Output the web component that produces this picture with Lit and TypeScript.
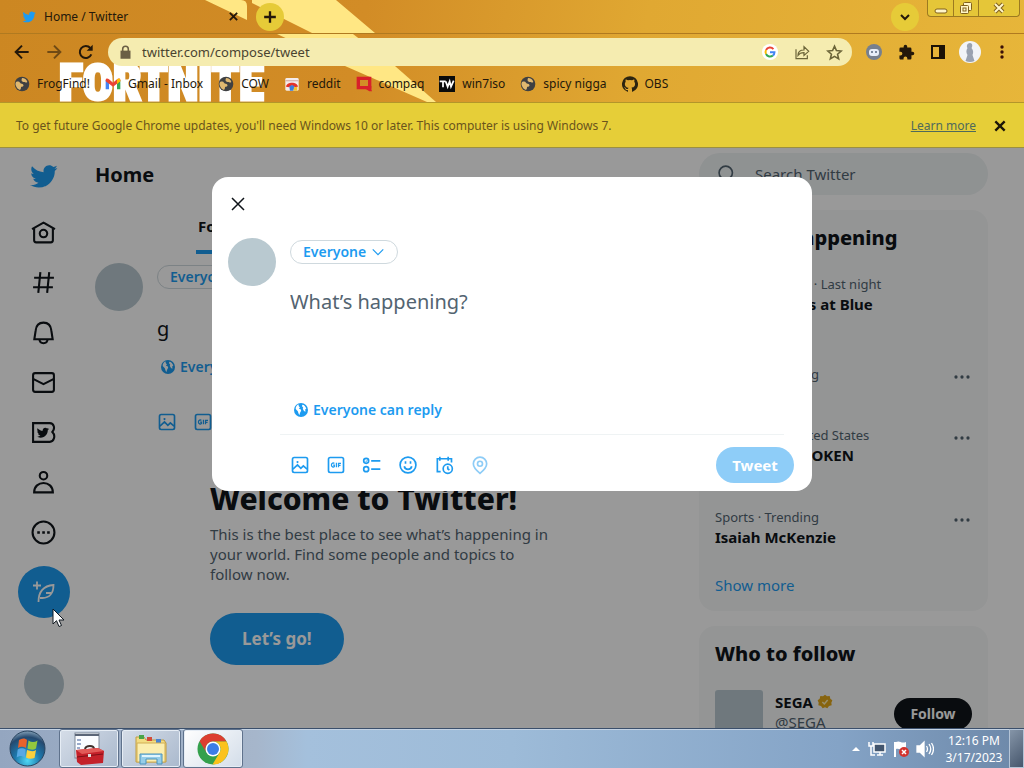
import { LitElement, html, css, svg, nothing } from "lit";
import { customElement, state } from "lit/decorators.js";
import { classMap } from "lit/directives/class-map.js";

const BIRD =
  "M23.643 4.937c-.835.37-1.732.62-2.675.733.962-.576 1.7-1.49 2.048-2.578-.9.534-1.897.922-2.958 1.13-.85-.904-2.06-1.47-3.4-1.47-2.572 0-4.658 2.086-4.658 4.66 0 .364.042.718.12 1.06-3.873-.195-7.304-2.05-9.602-4.868-.4.69-.63 1.49-.63 2.342 0 1.616.823 3.043 2.072 3.878-.764-.025-1.482-.234-2.11-.583v.06c0 2.257 1.605 4.14 3.737 4.568-.392.106-.803.162-1.227.162-.3 0-.593-.028-.877-.082.593 1.85 2.313 3.198 4.352 3.234-1.595 1.25-3.604 1.995-5.786 1.995-.376 0-.747-.022-1.112-.065 2.062 1.323 4.51 2.093 7.14 2.093 8.57 0 13.255-7.098 13.255-13.254 0-.2-.005-.402-.014-.602.91-.658 1.7-1.477 2.323-2.41z";

const line = (body: unknown, size = 24, width = 2) => html`<svg
  width=${size} height=${size} viewBox="0 0 24 24" fill="none" stroke="currentColor"
  stroke-width=${width} aria-hidden="true">${body}</svg>`;

const solid = (body: unknown, size = 16) => html`<svg
  width=${size} height=${size} viewBox="0 0 24 24" fill="currentColor" aria-hidden="true">${body}</svg>`;

const bird = (size: number) => solid(svg`<path d=${BIRD}/>`, size);

const cross = (size: number, width: number) => line(svg`<path d="M4 4l16 16M20 4L4 20"/>`, size, width);

const siteGlobe = solid(svg`
  <circle cx="12" cy="12" r="11" fill="#3f4042"/>
  <path fill="#e0b870" d="M3 9c3-1 5-1 6 1 1 2 4 1 5 3 1 2-1 3-3 3-1 1 0 3-2 5-3-1-5-3-6-6-1-2-1-4 0-6zM12 3c4 0 7 2 8 6-2 2-3 0-5 0s-5-1-3-6z"/>`);

const replyGlobe = solid(svg`
  <circle cx="12" cy="12" r="10.500"/>
  <path class="land" d="M8 3.500c1 2 0 3 2 4 1 1-1 2-1 3 2 0 4 1 3 3-1 2-2 3-2 6-2-1-2-4-3-6-1-1-3-2-3-4 0-2 2-5 4-6zM14 4c3 0 5 3 6 6-2 0-2 2-1 4-2 1-3-1-4-3-1-1 1-2 0-3-1-1-2-2-1-4z"/>`);

const pictureIcon = line(svg`
  <rect x="3" y="3" width="18" height="18" rx="2"/>
  <circle cx="9" cy="8.500" r="1.300" fill="currentColor" stroke="none"/>
  <path d="M3.500 17l5.500-5 4 4 3-3 4.500 4"/>`, 20);

const gifIcon = line(svg`
  <rect x="3" y="3" width="18" height="18" rx="2"/>
  <path stroke-width="1.500" d="M10 10.200C9 9 6.500 9.500 6.500 12s2.500 3 3.500 1.800V12H8.600M12.500 9.300v5.400M15 14.700V9.900h3M15 12.300h2.500"/>`, 20);

const pollIcon = line(svg`
  <circle cx="5" cy="7" r="3"/><circle cx="5" cy="17" r="3"/>
  <path d="M4 7l1 1 1.500-2" stroke-width="1"/><path d="M11 7h11M11 17h11"/>`, 20);

const smileIcon = line(svg`
  <circle cx="12" cy="12" r="9.500"/>
  <path d="M9 7.500v3M15 7.500v3M7.500 13.500c1 5 8 5 9 0"/>`, 20);

const scheduleIcon = line(svg`
  <path d="M8 20H4V4.500h17V9M7 2v5M17 2v5"/>
  <circle cx="16.500" cy="16.500" r="5.500"/><path d="M16.500 13.500v3l2 1.500"/>`, 20);

const placeIcon = line(svg`
  <path d="M12 22C7 18 4 14.500 4 10.500a8 8 0 0116 0C20 14.500 17 18 12 22z"/>
  <circle cx="12" cy="10.500" r="3"/>`, 20);

const toolIcons = [
  { label: "Media", icon: pictureIcon },
  { label: "GIF", icon: gifIcon },
  { label: "Poll", icon: pollIcon },
  { label: "Emoji", icon: smileIcon },
  { label: "Schedule", icon: scheduleIcon },
  { label: "Location", icon: placeIcon, off: true },
];

const navItems = [
  { label: "Home", icon: svg`<path d="M1 8.700L12 2.500l11 6.200"/><path d="M3 8v11.500a2 2 0 002 2h14a2 2 0 002-2V8"/><circle cx="12" cy="13" r="3.600"/>` },
  { label: "Explore", icon: svg`<path d="M9 2L7 22M17.500 2l-2 20M3 7.500h19M2 16.500h19"/>` },
  { label: "Notifications", icon: svg`<path d="M3.200 18.500L4.500 10C5 5 8 2.500 12 2.500S19 5 19.500 10l1.300 8.500zM8 18.500c.5 5 7.500 5 8 0"/>` },
  { label: "Messages", icon: svg`<rect x="2" y="3" width="20" height="18" rx="2"/><path d="M2 8.500l10 5 10-5"/>` },
  { label: "Twitter Blue", icon: svg`<path d="M2 3h16c4 0 5.500 5 2.500 8.500C24 15 22 21 18 21H2z"/><path transform="translate(5 6) scale(.52)" fill="currentColor" stroke="none" d=${BIRD}/>` },
  { label: "Profile", icon: svg`<circle cx="12" cy="5.500" r="3.600"/><path d="M3 21.500c0-12 18-12 18 0z"/>` },
  { label: "More", icon: svg`<circle cx="12" cy="12" r="10.500"/><path stroke-width="2.500" d="M6 12h2.500M10.800 12h2.500M15.500 12H18"/>` },
];

const gmail = svg`
  <path fill="#4285f4" d="M1 20V6l5 4v10z"/><path fill="#34a853" d="M18 20V10l5-4v14z"/>
  <path fill="#ea4335" d="M1 6c0-3 3-3 5-1l6 5 6-5c2-2 5-2 5 1v2l-11 8L1 8z"/>
  <path fill="#fbbc04" d="M18 5c2-2 5-2 5 1v2l-5 4z"/>`;
const snoo = svg`
  <rect x="2" y="3" width="20" height="19" rx="2" fill="#f4ecec"/>
  <path d="M2 7h20" stroke="#d9b7b0" stroke-width="2"/>
  <path fill="#e5332a" d="M3 16c1-8 17-8 18 0l-5 1c-2-3-6-3-8 0z"/>
  <path fill="#3b7ddd" d="M8 16c2-3 6-3 8 0l-2 6H9z"/><path fill="#f6c02c" d="M15 17l5-1v6h-6z"/>`;
const compaq = svg`<path fill="none" stroke="#d8202a" stroke-width="5" d="M20.500 19V3.500h-17v14H17"/><path fill="#d8202a" d="M14 15h9v5l1 3h-4l-6-4z"/>`;
const tw = svg`<rect width="24" height="24" fill="#0b0b0b"/><path fill="none" stroke="#fff" stroke-width="2.600" d="M1 8h9M6 8v9M10 8l3 8 3-8 2 8 4-9"/>`;
const octocat = svg`<path fill="#2c2410" d="M12 .3a12 12 0 00-3.800 23.400c.6.100.8-.3.800-.6v-2c-3.300.7-4-1.600-4-1.600-.6-1.400-1.400-1.800-1.400-1.800-1-.7.100-.7.100-.7 1.200 0 1.900 1.200 1.900 1.200 1 1.800 2.800 1.300 3.500 1 0-.8.400-1.300.7-1.600-2.700-.3-5.500-1.300-5.500-6 0-1.200.5-2.300 1.300-3.100-.2-.4-.6-1.600 0-3.200 0 0 1-.3 3.400 1.200a11.500 11.500 0 016 0c2.300-1.500 3.300-1.200 3.300-1.200.6 1.600.2 2.800 0 3.200.9.800 1.300 1.900 1.300 3.200 0 4.600-2.800 5.600-5.500 5.900.5.400.9 1 .9 2.200v3.300c0 .3.100.7.800.6A12 12 0 0012 .3"/>`;

const bookmarks = [
  { name: "FrogFind!", icon: siteGlobe },
  { name: "Gmail - Inbox", icon: solid(gmail) },
  { name: "COW", icon: siteGlobe },
  { name: "reddit", icon: solid(snoo) },
  { name: "compaq", icon: solid(compaq) },
  { name: "win7iso", icon: solid(tw) },
  { name: "spicy nigga", icon: siteGlobe },
  { name: "OBS", icon: solid(octocat) },
];

const trends = [
  { kind: "lead", context: "NHL Ice Hockey · Last night", title: "N.Y. Islanders at Blue Jackets", menu: false },
  { kind: "short", context: "Sports · Trending", title: "Mets", menu: true },
  { kind: "tall", context: "Trending in United States", title: "SONGS UNSPOKEN", menu: true },
  { kind: "last", context: "Sports · Trending", title: "Isaiah McKenzie", menu: true },
];

@customElement("app-root")
export class AppRoot extends LitElement {
  @state() private draft = "";

  static styles = css`
    :host {
      display: flex;
      flex-direction: column;
      height: 100vh;
      overflow: hidden;
      font-family: "Noto Sans", sans-serif;
      color: #0f1419;
    }
    * { box-sizing: border-box; }
    svg { display: block; flex: none; }
    button { font: inherit; color: inherit; background: none; border: 0; padding: 0; cursor: pointer; }
    a { color: inherit; text-decoration: none; }
    h1, h2, p { margin: 0; }

    /* Browser chrome */
    .chrome {
      position: relative;
      flex: none;
      font-size: 12px;
      line-height: 16px;
      color: #24180a;
      background: linear-gradient(100deg, #cc8722 0%, #d28c26 35%, #e0a832 62%, #e7b63a 100%);
    }
    .art { position: absolute; inset: 0; width: 100%; height: 102px; overflow: hidden; }
    .art svg { position: absolute; left: 0; top: 0; }
    .wordmark {
      position: absolute;
      left: 59px;
      top: 51px;
      font: 900 50px/64px "Roboto Condensed", "Open Sans Condensed", "Liberation Sans Narrow", "Roboto", sans-serif;
      color: #fff;
      -webkit-text-stroke: 3px #fff;
    }
    .row { position: relative; display: flex; align-items: center; }
    .tabs { height: 34px; padding-left: 22px; border-bottom: 1px solid #b07a20; align-items: stretch; }
    .tab { display: flex; align-items: center; width: 217px; }
    .tab .bird { color: #1d9bf0; margin-right: 8px; }
    .tab .name { flex: 1; }
    .round {
      display: grid;
      place-items: center;
      width: 28px;
      height: 28px;
      border-radius: 50%;
      background: #e6cb38;
      margin: 3px 0 0 17px;
    }
    .spread { flex: 1; }
    .caption {
      display: flex;
      height: 17px;
      margin: 0 4px 0 8px;
      border: 1px solid #9c7a20;
      border-top: 0;
      border-radius: 0 0 4px 4px;
      background: #e5c638;
    }
    .caption button { display: grid; place-items: center; width: 25px; color: #fff7d0; }
    .caption button + button { border-left: 1px solid #9c7a20; }
    .caption button:last-child { width: 41px; }
    .toolbar { height: 36px; padding: 0 6px 0 14px; }
    .toolbar > .step { margin-right: 16px; }
    .toolbar .dim { opacity: .55; }
    .address {
      flex: 1;
      display: flex;
      align-items: center;
      height: 28px;
      padding: 0 2px 0 10px;
      margin-right: 6px;
      margin-left: -2px;
      border-radius: 14px;
      background: #f5ecb0;
    }
    .address input {
      flex: 1;
      min-width: 0;
      margin-left: 9px;
      padding: 0;
      border: 0;
      outline: 0;
      background: none;
      font: 13px/20px "Noto Sans", sans-serif;
      color: #4a4430;
    }
    .address button { display: grid; place-items: center; width: 32px; color: #6b6438; }
    .ext { display: grid; place-items: center; width: 32px; }
    .bookmarks { height: 32px; padding: 0 0 4px 14px; gap: 15px; }
    .bookmarks a { display: flex; align-items: center; gap: 7px; }
    .infobar {
      position: relative;
      display: flex;
      align-items: center;
      height: 46px;
      padding: 2px 17px 0 16px;
      border-top: 1px solid #b3962a;
      border-bottom: 1px solid #9c9040;
      background: #e6ce38;
      color: #6a541c;
    }
    .infobar p { flex: 1; }
    .infobar a { color: #4f6a5c; text-decoration: underline; margin-right: 17px; }
    .infobar button { color: #1c1608; }

    /* Site */
    .site {
      position: relative;
      flex: 1;
      min-height: 0;
      overflow: hidden;
      display: grid;
      grid-template-columns: 79px minmax(0, 1fr) 289px;
      grid-template-rows: minmax(0, 1fr);
      padding: 0 36px 0 4px;
      background: #fff;
      font-size: 15px;
      line-height: 20px;
    }
    .nav { display: flex; flex-direction: column; align-items: center; padding: 3px 0 24px; min-height: 0; }
    .nav a { display: grid; place-items: center; width: 50px; height: 50px; flex: none; }
    .nav .logo { color: #1d9bf0; margin-bottom: 6px; }
    .compose {
      display: grid;
      place-items: center;
      flex: none;
      width: 52px;
      height: 52px;
      margin-top: 9px;
      border-radius: 50%;
      background: #1d9bf0;
      color: #fff;
    }
    .avatar { flex: none; width: 48px; height: 48px; border-radius: 50%; background: #b9c9d0; }
    .nav .avatar { width: 40px; height: 40px; margin-top: auto; }
    .main { padding-left: 12px; }
    .main h1 { font-size: 20px; line-height: 24px; padding-top: 15px; }
    .views { display: flex; height: 53px; margin: 14px 0 9px; width: 600px; max-width: 100%; }
    .views button { position: relative; width: 50%; display: flex; justify-content: center; align-items: center; font-weight: 500; color: #536471; }
    .views .on { font-weight: 700; color: #0f1419; width: 262px; }
    .views .on span { padding: 15px 2px 14px; border-bottom: 4px solid #1d9bf0; }
    .entry { display: flex; gap: 14px; }
    .entry .col { flex: 1; min-width: 0; }
    .pill {
      display: flex;
      align-items: center;
      gap: 5px;
      width: max-content;
      height: 24px;
      padding: 0 12px;
      border: 1px solid #cfd9de;
      border-radius: 12px;
      color: #1d9bf0;
      font-size: 14px;
      line-height: 16px;
      font-weight: 600;
    }
    .reply { display: flex; align-items: center; gap: 4px; color: #1d9bf0; font-size: 14px; font-weight: 600; height: 24px; padding-left: 3px; }
    .land { fill: #fff; }
    .tools { display: flex; gap: 16px; color: #1d9bf0; }
    .tools .off { opacity: .5; }
    .main .pill { margin-top: 2px; }
    .typed { font-size: 20px; line-height: 24px; margin: 28px 0 14px; }
    .main .tools { margin-top: 33px; }
    .welcome { margin: 50px 0 0 115px; width: 340px; max-width: 100%; }
    .welcome h2 { font-size: 30px; line-height: 34px; font-weight: 800; white-space: nowrap; margin-bottom: 8px; }
    .welcome p { color: #536471; }
    .go { height: 52px; padding: 0 32px; margin-top: 29px; border-radius: 26px; background: #1d9bf0; color: #fff; font-size: 17px; font-weight: 700; }

    .side { min-width: 0; }
    .search { display: flex; align-items: center; gap: 18px; height: 42px; margin-top: 5px; padding: 0 18px; border-radius: 21px; background: #eff3f4; color: #536471; }
    .search input { flex: 1; min-width: 0; border: 0; padding: 0; outline: 0; background: none; font: inherit; }
    input::placeholder, textarea::placeholder { color: #536471; opacity: 1; }
    .card { margin-top: 15px; border-radius: 16px; background: #f7f9f9; padding: 15px 16px; }
    .card h2 { font-size: 20px; line-height: 26px; font-weight: 800; }
    .trend { display: flex; justify-content: space-between; align-items: flex-start; }
    .trend p { font-size: 13px; color: #536471; white-space: nowrap; }
    .trend strong { display: block; font-weight: 700; }
    .trend button { color: #536471; margin: 4px 1px 0 0; }
    .lead { height: 113px; padding-top: 23px; }
    .lead > div { width: 175px; }
    .short { height: 61px; }
    .tall { height: 82px; }
    .last { height: 68px; }
    .more { color: #1d9bf0; display: block; }
    .trends { height: 401px; }
    .follow { display: flex; align-items: flex-start; margin-top: 23px; gap: 12px; }
    .follow .avatar { border-radius: 3px; }
    .follow .who { flex: 1; }
    .who strong { display: flex; align-items: center; gap: 4px; margin-top: 2px; }
    .who span { color: #536471; }
    .follow button { width: 78px; height: 32px; margin-top: 8px; border-radius: 16px; background: #0f1419; color: #fff; font-size: 14px; font-weight: 700; }

    /* Composer dialog over the dimmed site */
    .veil { position: absolute; inset: 0; background: rgba(0, 0, 0, .4); display: flex; justify-content: center; align-items: flex-start; padding: 29px 16px 0; }
    .dialog { width: 600px; max-width: 100%; border-radius: 16px; background: #fff; padding: 17px 18px 8px 16px; }
    .close { display: grid; place-items: center; width: 20px; height: 20px; }
    .dialog .entry { margin-top: 24px; }
    .dialog .pill { margin-top: 2px; }
    .dialog textarea { display: block; width: 100%; height: 110px; margin: 24px 0 0; padding: 2px 0; border: 0; outline: 0; resize: none; font: 20px/24px "Noto Sans", sans-serif; color: #0f1419; }
    .foot { display: flex; align-items: center; justify-content: space-between; margin: 0 0 0 52px; padding: 12px 0 0 10px; }
    .rule { height: 1px; background: #eff3f4; margin: 12px 10px 0 52px; border: 0; }
    .tweet { width: 78px; height: 36px; border-radius: 18px; background: #8ecdf8; color: #fff; font-weight: 700; }
    .pointer { position: absolute; left: 52px; top: 460px; }

    /* Taskbar */
    .taskbar {
      flex: none;
      display: flex;
      align-items: center;
      height: 40px;
      padding-left: 9px;
      border-top: 1px solid #3b4f6b;
      box-shadow: inset 0 1px #c4d3e4;
      background: linear-gradient(90deg, #94a6c0 0%, #a6b6cb 25%, #a4c0dc 30%, #9dbbd8 50%, #84a3c6 82%, #6d88a8 100%);
      color: #fff;
      font-size: 12px;
      line-height: 17px;
    }
    .start { margin-right: 13px; }
    .app { display: grid; place-items: center; width: 60px; height: 39px; margin-right: 2px; border: 1px solid #5f728c; border-radius: 3px; box-shadow: inset 0 0 0 1px #e6edf5; background: linear-gradient(135deg, #d5dde8, #aab9cd); }
    .app.open { background: linear-gradient(135deg, #fff, #d3dde9); }
    .tray { display: flex; align-items: center; gap: 6px; margin-left: auto; }
    .clock { width: 64px; text-align: center; margin: 0 -1px 0 2px; }
    .peek { width: 15px; height: 39px; border: 1px solid #b4c4d6; background: linear-gradient(135deg, #8595a8, #46566c); margin-left: -2px; }
  `;

  private tools() {
    return html`<div class="tools">${toolIcons.map((t) => html`<button
      class=${classMap({ off: !!t.off })} aria-label=${t.label}>${t.icon}</button>`)}</div>`;
  }

  private renderChrome() {
    return html`<header class="chrome">
      <div class="art" aria-hidden="true">
        <svg width="460" height="102" fill="#ffe784">
          <path d="M205 0h36q6 0 6 6v14zM252 0h84l39 33h-63L252 3z"/>
          <path d="M277 34h76l42 32 41 36h-9l-82-36z"/>
        </svg>
        <div class="wordmark">FORTNITE</div>
      </div>
      <div class="row tabs">
        <div class="tab">
          <span class="bird">${bird(14)}</span><span class="name">Home / Twitter</span>
          <button aria-label="Close tab">${cross(11, 4)}</button>
        </div>
        <button class="round" aria-label="New tab">${line(svg`<path d="M12 2v20M2 12h20"/>`, 14, 4)}</button>
        <span class="spread"></span>
        <button class="round" aria-label="Search tabs">${line(svg`<path d="M4 8l8 8 8-8"/>`, 12, 4)}</button>
        <div class="caption">
          <button aria-label="Minimize"><svg width="14" height="14"><rect x="1" y="8" width="12" height="4" rx="2" fill="#fff6c8" stroke="#80601c"/></svg></button>
          <button aria-label="Restore"><svg width="14" height="15" fill="#fff6c8" stroke="#80601c"><rect x="4.500" y="1.500" width="8" height="8" rx="1"/><rect x="1.500" y="4.500" width="8" height="8" rx="1"/><rect x="4" y="7" width="3" height="3"/></svg></button>
          <button aria-label="Close"><svg width="14" height="14"><path d="M3 3l8 8M11 3l-8 8" stroke="#80601c" stroke-width="4"/><path d="M3 3l8 8M11 3l-8 8" stroke="#fff6c8" stroke-width="2"/></svg></button>
        </div>
      </div>
      <div class="row toolbar">
        <button class="step" aria-label="Back">${line(svg`<path d="M22 12H3M12 2.500L2.500 12l9.500 9.500"/>`, 16, 3)}</button>
        <button class="step dim" aria-label="Forward">${line(svg`<path d="M2 12h19M12 2.500l9.500 9.500-9.500 9.500"/>`, 16, 3)}</button>
        <button class="step" aria-label="Reload">${line(svg`<path d="M20 15.500A9 9 0 1118.500 6"/><path d="M22 1v9h-9z" fill="currentColor" stroke="none"/>`, 16, 3)}</button>
        <div class="address">
          ${solid(svg`<path fill="#6b5f45" d="M4 9h16v13H4z"/><path fill="none" stroke="#6b5f45" stroke-width="2.500" d="M7.500 10V6.500a4.500 4.500 0 019 0V10"/>`, 15)}
          <input aria-label="Address" value="twitter.com/compose/tweet">
          <button aria-label="Google Lens"><svg width="18" height="18" viewBox="0 0 20 20" fill="none" stroke-width="2.200">
            <circle cx="10" cy="10" r="9" fill="#fff"/>
            <path stroke="#ea4335" d="M13.800 6.700A5 5 0 005.600 7.700"/><path stroke="#fbbc04" d="M5.600 7.700a5 5 0 000 4.600"/>
            <path stroke="#34a853" d="M5.600 12.300a5 5 0 007.600 1.600"/><path stroke="#4285f4" d="M13.200 13.900A5 5 0 0015 10.200h-5"/></svg></button>
          <button aria-label="Share">${line(svg`<path d="M3 8v14h17v-5M6 17c0-6 4-8 9-8V4l7 7-7 6v-4c-4 0-7 1-9 4z"/>`, 16, 1.800)}</button>
          <button aria-label="Bookmark">${line(svg`<path d="M12 3l2.700 6.300 6.800.6-5.200 4.500 1.600 6.700L12 17.500l-5.900 3.600 1.600-6.700-5.200-4.500 6.800-.6z"/>`, 17, 2.200)}</button>
        </div>
        <button class="ext" aria-label="Extension"><svg width="18" height="18"><circle cx="9" cy="9" r="8" fill="#77808e"/><rect x="4" y="6" width="10" height="7" rx="3" fill="#e8eef8"/><circle cx="7" cy="9" r="1" fill="#5a6880"/><circle cx="11" cy="9" r="1" fill="#5a6880"/></svg></button>
        <button class="ext" aria-label="Extensions">${solid(svg`<path d="M20.500 11H19V7a2 2 0 00-2-2h-4V3.500a2.500 2.500 0 00-5 0V5H4a2 2 0 00-2 2v3.800h1.500a2.700 2.700 0 010 5.400H2V20c0 1.100.9 2 2 2h3.800v-1.500a2.700 2.700 0 015.400 0V22H17a2 2 0 002-2v-4h1.500a2.500 2.500 0 000-5z"/>`, 17)}</button>
        <button class="ext" aria-label="Side panel"><svg width="16" height="16"><rect x="2" y="2" width="12" height="12" fill="none" stroke="#1c1206" stroke-width="2"/><rect x="9" y="2" width="5" height="12" fill="#1c1206"/></svg></button>
        <button class="ext" aria-label="Profile"><svg width="22" height="22"><circle cx="11" cy="11" r="11" fill="#f2f4f7"/><path fill="#9aa2b0" d="M11 2c3 0 2.500 4 1.500 5 2 2 2 5 1 7l2 6q-4.500 2-9 0l2-6c-1.500-2-1.500-5 0-7-1-1-1-5 2.500-5z"/></svg></button>
        <button class="ext" aria-label="Menu"><svg width="20" height="16" fill="#3a0f08"><circle cx="10" cy="3" r="1.700"/><circle cx="10" cy="8" r="1.700"/><circle cx="10" cy="13" r="1.700"/></svg></button>
      </div>
      <nav class="row bookmarks">${bookmarks.map((b) => html`<a href="#">${b.icon}<span>${b.name}</span></a>`)}</nav>
      <div class="infobar">
        <p>To get future Google Chrome updates, you'll need Windows 10 or later. This computer is using Windows 7.</p>
        <a href="#">Learn more</a>
        <button aria-label="Dismiss">${cross(14, 4)}</button>
      </div>
    </header>`;
  }

  private renderMain() {
    return html`<main class="main">
      <h1>Home</h1>
      <div class="views"><button class="on"><span>For you</span></button><button>Following</button></div>
      <div class="entry">
        <div class="avatar"></div>
        <div class="col">
          <button class="pill">Everyone</button>
          <p class="typed">g</p>
          <div class="reply">${replyGlobe}<span>Everyone can reply</span></div>
          ${this.tools()}
        </div>
      </div>
      <section class="welcome">
        <h2>Welcome to Twitter!</h2>
        <p>This is the best place to see what’s happening in your world. Find some people and topics to follow now.</p>
        <button class="go">Let’s go!</button>
      </section>
    </main>`;
  }

  private renderSide() {
    return html`<aside class="side">
      <label class="search">${line(svg`<circle cx="10.500" cy="10.500" r="8"/><path d="M16.500 16.500l6 6"/>`, 20)}<input placeholder="Search Twitter" aria-label="Search Twitter"></label>
      <section class="card trends">
        <h2>What’s happening</h2>
        ${trends.map((t) => html`<div class="trend ${t.kind}">
          <div><p>${t.context}</p><strong>${t.title}</strong></div>
          ${t.menu ? html`<button aria-label="More">${solid(svg`<circle cx="4" cy="12" r="2.200"/><circle cx="12" cy="12" r="2.200"/><circle cx="20" cy="12" r="2.200"/>`, 18)}</button>` : nothing}
        </div>`)}
        <a class="more" href="#">Show more</a>
      </section>
      <section class="card">
        <h2>Who to follow</h2>
        <div class="follow">
          <div class="avatar"></div>
          <div class="who"><strong>SEGA ${solid(svg`<path fill="#e2a719" d="M12 1l3 2.500 4-.5 1 4 3 2.500-1.500 3.500.5 4-4 1-2.500 3.500L12 20l-3.500 1.500L6 18l-4-1 .5-4L1 9.500 4 7l1-4 4 .5z"/><path fill="none" stroke="#fff0b8" stroke-width="2.200" d="M8 12l3 3 5-6"/>`)}</strong><span>@SEGA</span></div>
          <button>Follow</button>
        </div>
      </section>
    </aside>`;
  }

  private renderDialog() {
    return html`<div class="veil">
      <section class="dialog" role="dialog" aria-label="Compose Tweet">
        <button class="close" aria-label="Close">${cross(18, 2)}</button>
        <div class="entry">
          <div class="avatar"></div>
          <div class="col">
            <button class="pill">Everyone ${line(svg`<path d="M3 7.500l9 9 9-9"/>`, 14)}</button>
            <textarea aria-label="Tweet text" placeholder="What’s happening?" .value=${this.draft}
              @input=${(e: InputEvent) => (this.draft = (e.target as HTMLTextAreaElement).value)}></textarea>
            <div class="reply">${replyGlobe}<span>Everyone can reply</span></div>
          </div>
        </div>
        <hr class="rule">
        <div class="foot">${this.tools()}<button class="tweet">Tweet</button></div>
      </section>
    </div>`;
  }

  private renderTaskbar() {
    return html`<footer class="taskbar">
      <button class="start" aria-label="Start"><svg width="37" height="37" viewBox="0 0 37 37">
        <defs><radialGradient id="orb" cx=".5" cy=".85" r=".9"><stop offset="0" stop-color="#4fd8f4"/><stop offset=".4" stop-color="#1d78ac"/><stop offset=".75" stop-color="#25496f"/><stop offset="1" stop-color="#9fb9cc"/></radialGradient></defs>
        <circle cx="18.500" cy="18.500" r="17.500" fill="url(#orb)" stroke="#29445f"/>
        <path fill="#e8622c" d="M10 10c3-2 6-2 8 0l-1 8c-3-2-6-1-8 0z"/><path fill="#93c83e" d="M19.500 10.500c3 2 6 2 9 0l-1.500 8c-3 2-6 1-8.500 0z"/>
        <path fill="#57a8e4" d="M8.700 19.500c3-2 6-1 8 0l-1 8c-3-2-5-2-8 0z"/><path fill="#fbd03c" d="M18 20c3 1 6 2 9 0l-1.500 8c-3 1-6 1-8.500-.5z"/></svg></button>
      <button class="app" aria-label="Toolbox"><svg width="32" height="34" viewBox="0 0 32 34">
        <rect x="2" y="1" width="24" height="25" fill="#fafcff" stroke="#7d8797"/><path d="M2 3h24" stroke="#5b6678" stroke-width="2"/><path d="M4 8h4M4 12h4M4 16h3" stroke="#7b90ba" stroke-width="1.500"/>
        <path d="M12 17c1-4 9-4 9 0" fill="none" stroke="#40302c" stroke-width="2"/><path fill="#c4212a" d="M3 18l22-2 6 3-1 12-22 2-4-3z"/><path fill="#e25a58" d="M3 18l22-2 6 3-22 3z"/><path d="M4 25l26-3" stroke="#7d1016"/><path fill="#ddd" d="M15 22h3v3h-3z"/></svg></button>
      <button class="app" aria-label="Explorer"><svg width="34" height="34" viewBox="0 0 34 34">
        <path fill="#f3dc82" stroke="#c09c42" d="M2 5h8l2 3h18l2 3v19H2z"/><path fill="#49a548" d="M5 3h5v4H5z"/><path fill="#d44b38" d="M13 5h5v4h-5z"/><path fill="#4b84d0" d="M22 7h5v4h-5z"/>
        <path fill="#fbeeb0" stroke="#d0ae54" d="M3 11h28v19H3z"/><path fill="#95cde8" stroke="#4a93bd" d="M6 22h22v10h-5v-5H12v5H6z"/><path stroke="#e0f5fd" stroke-width="2" d="M8 24h18"/></svg></button>
      <button class="app open" aria-label="Chrome"><svg width="32" height="32" viewBox="0 0 32 32">
        <circle cx="16" cy="16" r="15.500" fill="#34a04c"/><path fill="#dc3e30" d="M2.600 8.200A15.500 15.500 0 0129.500 8.500H16a7.500 7.500 0 00-6.500 11.200z"/>
        <path fill="#fbc21c" d="M29.500 8.500A15.500 15.500 0 0115.500 31.500l7-11.700A7.500 7.500 0 0016 8.500z"/><circle cx="16" cy="16" r="7.500" fill="#fff"/><circle cx="16" cy="16" r="6" fill="#3c7de8"/></svg></button>
      <div class="tray">
        ${solid(svg`<path fill="#fff" d="M4 16l8-8 8 8z"/>`, 12)}
        <svg width="18" height="18" fill="none" stroke="#fff" stroke-width="1.500"><rect x="6" y="4" width="11" height="8" fill="#42556d"/><path d="M9 15h6M12 12v3M1 2v4h4V2M3 6v9h4"/></svg>
        <svg width="18" height="18"><path d="M3 2v15" stroke="#fff" stroke-width="2"/><path fill="#fff" d="M4 2c4-2 5 2 10 0v7c-5 2-6-1-10 0z"/><circle cx="12" cy="12" r="5" fill="#d3342e"/><path d="M10 10l4 4M14 10l-4 4" stroke="#fff" stroke-width="1.500"/></svg>
        <svg width="18" height="18" fill="none" stroke="#fff" stroke-width="1.300"><path fill="#fff" d="M1 6h3l4-4v14l-4-4H1z"/><path d="M10.500 6q2 3 0 6M13 4q3.500 5 0 10M15.500 3q4 6 0 12"/></svg>
        <div class="clock">12:16 PM<br>3/17/2023</div>
        <button class="peek" aria-label="Show desktop"></button>
      </div>
    </footer>`;
  }

  render() {
    return html`${this.renderChrome()}
      <div class="site">
        <nav class="nav">
          <a class="logo" href="#" aria-label="Twitter">${bird(29)}</a>
          ${navItems.map((n) => html`<a href="#" aria-label=${n.label}>${line(n.icon, 25)}</a>`)}
          <button class="compose" aria-label="Tweet">${line(svg`<path d="M5 1.500v8M1 5.500h8M6.500 22c0-9 3-16 15-17 0 8-4 13-11 13H8M14 13h5"/>`, 24, 1.800)}</button>
          <div class="avatar"></div>
        </nav>
        ${this.renderMain()}
        ${this.renderSide()}
        ${this.renderDialog()}
        <svg class="pointer" width="13" height="20" viewBox="0 0 13 20" aria-hidden="true"><path fill="#fff" stroke="#101820" d="M1 1v15l3.500-3.300L7 18.500l2.500-1L7 12h5z"/></svg>
      </div>
      ${this.renderTaskbar()}`;
  }
}
